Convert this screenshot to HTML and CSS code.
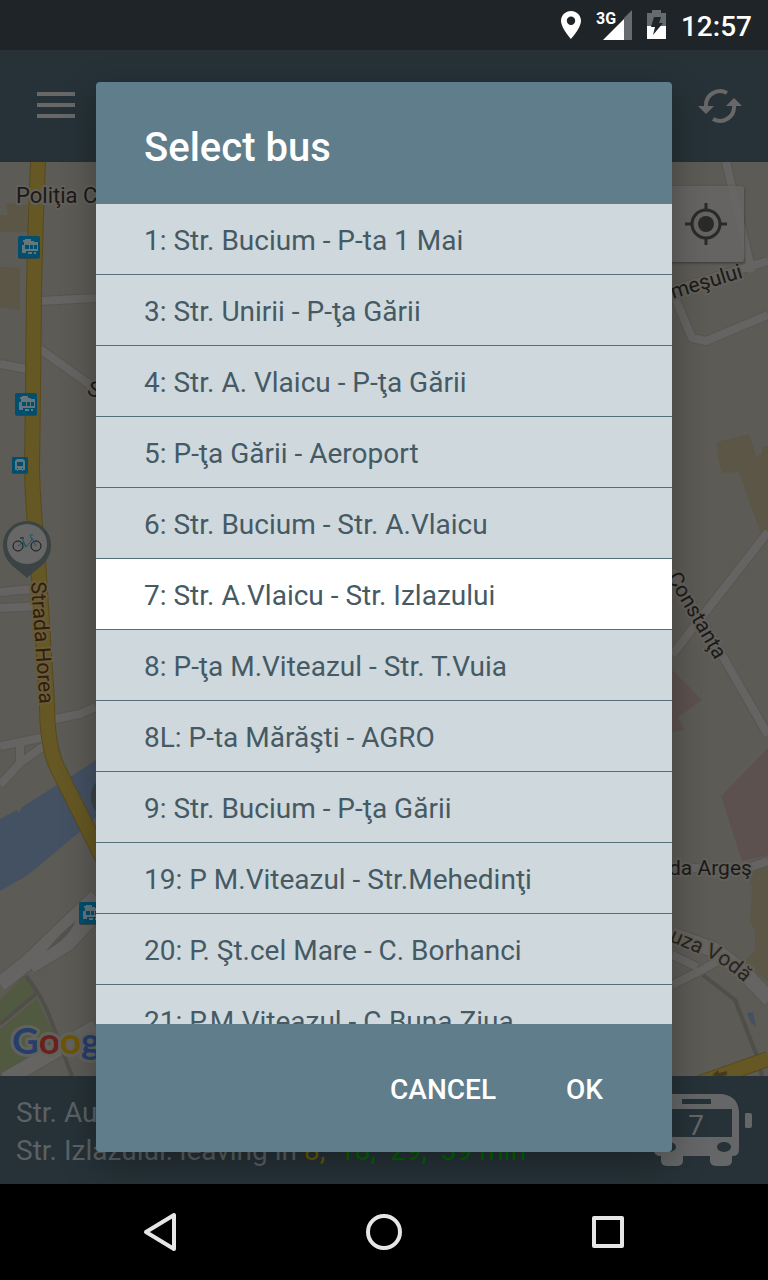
FILE: index.html
```html
<!DOCTYPE html>
<html lang="en">
<head>
<meta charset="utf-8">
<meta name="viewport" content="width=device-width, initial-scale=1">
<title>Select bus</title>
<link rel="stylesheet" href="styles.css">
</head>
<body>
<div class="app">
  <div class="status-bar">
    <svg class="status-pin" width="20" height="28" viewBox="0 0 20 28"><path fill-rule="evenodd" d="M10 0C4.500 0 0 4.300 0 9.800 0 17 10 28 10 28s10-11 10-18.200C20 4.300 15.500 0 10 0zm0 5.600a4.200 4.200 0 1 1 0 8.400 4.200 4.200 0 0 1 0-8.400z"/></svg>
    <svg class="status-signal" width="36" height="30" viewBox="0 0 36 30"><path class="faded" d="M28 8l8-8v30h-8z"/><path d="M7 30L28 9v21z"/><text x="0" y="14">3G</text></svg>
    <svg width="19" height="30" viewBox="0 0 19 30"><path class="faded" d="M0 3h5V0h9v3h5v13H0z"/><path d="M0 16h19v13H0z"/><path class="bolt" d="M7 7h7l-2 6h4L6 25l2-8H4z"/></svg>
    <span class="clock">12:57</span>
  </div>

  <header class="app-bar">
    <button class="icon-button" aria-label="Menu"><svg width="38" height="28" viewBox="0 0 38 28"><path d="M0 2h38M0 13h38M0 24h38" stroke-width="4"/></svg></button>
    <button class="icon-button" aria-label="Refresh"><svg width="44" height="36" viewBox="0 0 44 36"><path d="M8 18A14 14 0 0 1 29 5M36 18A14 14 0 0 1 15 31" stroke-width="4"/><path class="heads" d="M0 18h16l-8 8zM28 18h16l-8-8z"/></svg></button>
  </header>

  <main class="map">
    <svg class="map-canvas" viewBox="0 162 768 914" preserveAspectRatio="xMidYMid slice">
      <defs>
        <path id="cuza-voda" d="M669 941L712 959Q737 972 764 1004"/>
        <g id="tram">
          <rect class="stop-shadow" y="1" width="22" height="22" rx="2"/>
          <rect class="stop" width="22" height="22" rx="2"/>
          <path class="glyph" d="M7 3h6v2h3v1h4v9H8v2H4V9h2V6H5V4h2z"/>
          <path class="stop" d="M7 9h4v4H7zM12 9h3v4h-3zM16 9h3v4h-3z"/>
          <path class="glyph" d="M10 16h4v2h-4zM16 16h2v2h-2z"/>
        </g>
      </defs>

      <g class="building">
        <path d="M6 203l24 2v27H0v-17h8zM0 267l20 1v42l-20-3z"/>
        <path d="M717 442l32-8 7 22 6-2v-7l6-1v86l-7 2-22-62-17 1-4-15z"/>
        <path d="M748 872l20-10v120l-24-20 11-12v-20l-5-8 2-34z"/>
      </g>
      <path class="campus" d="M672 670l30 30-24 17 6 13-12 2zM768 748l-47 48 21 65 26-6z"/>
      <path class="park" d="M0 1000l25-26 11 19-36 28zM0 1029l37-31 15 32 6 14-58 32z"/>
      <path class="water" d="M0 819l17-9 2 3 3-6 56-35 18-12v58l-62 52-11 8-23 13zM747 1013l6-1 3 15-5-4z"/>

      <g class="road-edge">
        <path d="M40 301l56-3M40 349l56 40M0 364l27 5M0 592l32-3M0 608l40-2M55 719l25-5 16-7M0 746l45-9M0 785l20-22 28-20M20 745v18"/>
        <path d="M726 162l26 110M672 290l96-29M676 300l16 38 14 3 62-26M768 532l-96 123M672 570l50 85 46 80M672 867l70 3 26-9M672 955l25 12M672 985l28-14 18-10"/>
        <path class="wide" d="M672 935l40 14Q740 966 770 1000M0 984l28-22 68-65M30 966l38-23 28-30M5 1080l91-53"/>
      </g>
      <g class="road">
        <path d="M40 301l56-3M40 349l56 40M0 364l27 5M0 592l32-3M0 608l40-2M55 719l25-5 16-7M0 746l45-9M0 785l20-22 28-20M20 745v18"/>
        <path d="M726 162l26 110M672 290l96-29M676 300l16 38 14 3 62-26M768 532l-96 123M672 570l50 85 46 80M672 867l70 3 26-9M672 955l25 12M672 985l28-14 18-10"/>
        <path class="wide" d="M672 935l40 14Q740 966 770 1000M0 984l28-22 68-65M30 966l38-23 28-30M5 1080l91-53"/>
      </g>
      <path class="rail" d="M26 976q16 20 24 42l22 58M703 975l32 25 22 56 6 24M0 1024l36-30"/>
      <path class="median" d="M46 951q14-18 30-30-8 18-30 30z"/>

      <path class="avenue-edge" d="M38 162Q35 240 34 290L33 390 32 470Q33 510 38 560L47 703Q47 745 57 767L106 865M700 1083l68-24"/>
      <path class="avenue" d="M38 162Q35 240 34 290L33 390 32 470Q33 510 38 560L47 703Q47 745 57 767L106 865M700 1083l68-24"/>
      <path class="arrow" d="M712 1075l6-5 1 3 8-2v4l-8 2z"/>

      <use href="#tram" x="18" y="236"/>
      <use href="#tram" x="15" y="393"/>
      <use href="#tram" x="79" y="902"/>
      <rect class="stop-shadow" x="12" y="458" width="16" height="16" rx="1"/>
      <rect class="stop" x="12" y="457" width="16" height="16" rx="1"/>
      <path class="glyph" d="M17 459h6l2 2v9h-2v1h-1v-1h-4v1h-1v-1h-2v-9z"/>
      <path class="stop" d="M17 462h6v4h-6zM17 468h1v1h-1zM22 468h1v1h-1z"/>

      <g class="labels">
        <text class="place" x="16" y="203">Poliţia C</text>
        <text transform="translate(86 394) rotate(20)">S</text>
        <text class="major" transform="translate(31 582) rotate(86)">Strada Horea</text>
        <text transform="translate(673 299) rotate(-17)">meşului</text>
        <text transform="translate(667 577) rotate(60)">Constanţa</text>
        <text x="669" y="875">da Argeş</text>
        <text class="route"><textPath href="#cuza-voda">uza Vodă</textPath></text>
      </g>

      <circle class="pin" cx="115" cy="797" r="24"/>
      <path class="pin" d="M27 521a24 24 0 0 0-24 24c0 18 15 24 24 33 9-9 24-15 24-33a24 24 0 0 0-24-24z"/>
      <circle class="pin-face" cx="27" cy="544" r="20"/>
      <g class="bike"><circle cx="18" cy="546" r="5"/><circle cx="36" cy="546" r="5"/><path d="M20 538h4"/><path class="frame" d="M18 546l5-4 3 5 6-7-2-5h3M32 538l4 8M22 538l4 9"/></g>

      <text class="google" x="12" y="1054"><tspan class="g-blue">G</tspan><tspan class="g-red">o</tspan><tspan class="g-yellow">o</tspan><tspan class="g-blue">g</tspan></text>
    </svg>
    <button class="locate" aria-label="My location"><svg width="42" height="42" viewBox="0 0 42 42"><circle cx="21" cy="21" r="14" class="ring"/><circle cx="21" cy="21" r="8"/><path class="ring" d="M21 0v6M21 36v6M0 21h6M36 21h6"/></svg></button>
  </main>

  <section class="departures">
    <div class="departure-text">
      <p>Str. Au</p>
      <p>Str. Izlazului: leaving in <span class="soon">8,</span>&nbsp; <span class="later">18,&nbsp; 29,&nbsp; 39 min</span></p>
    </div>
    <svg class="bus" width="112" height="76" viewBox="640 1092 112 76">
      <path d="M670 1094h52q16 2 17 18v38q0 6-7 6v5q0 5-7 5h-8q-7 0-7-5v-5h-27v5q0 5-7 5h-8q-7 0-7-5v-5q-7 0-7-6v-38q1-16 14-18zM746 1113h4q2 0 2 2v11q0 2-2 2h-4q-1 0-1-2v-11q0-2 1-2zM642 1113h4q1 0 1 2v11q0 2-1 2h-4q-2 0-2-2v-11q0-2 2-2z"/>
      <path class="hole" d="M682 1099h29v5h-29zM662 1109h70v28h-70z"/>
      <ellipse class="hole" cx="724" cy="1147" rx="7" ry="5"/><ellipse class="hole" cx="669" cy="1147" rx="7" ry="5"/>
      <text x="696" y="1135">7</text>
    </svg>
  </section>

  <div class="overlay">
    <div class="dialog" role="dialog" aria-labelledby="dialog-title">
      <h1 class="dialog-title" id="dialog-title">Select bus</h1>
      <ul class="bus-list">
        <li><button class="bus-row">1: Str. Bucium - P-ta 1 Mai</button></li>
        <li><button class="bus-row">3: Str. Unirii - P-ţa Gării</button></li>
        <li><button class="bus-row">4: Str. A. Vlaicu - P-ţa Gării</button></li>
        <li><button class="bus-row">5: P-ţa Gării - Aeroport</button></li>
        <li><button class="bus-row">6: Str. Bucium - Str. A.Vlaicu</button></li>
        <li><button class="bus-row selected">7: Str. A.Vlaicu - Str. Izlazului</button></li>
        <li><button class="bus-row">8: P-ţa M.Viteazul - Str. T.Vuia</button></li>
        <li><button class="bus-row">8L: P-ta Mărăşti - AGRO</button></li>
        <li><button class="bus-row">9: Str. Bucium - P-ţa Gării</button></li>
        <li><button class="bus-row">19: P M.Viteazul - Str.Mehedinţi</button></li>
        <li><button class="bus-row">20: P. Şt.cel Mare - C. Borhanci</button></li>
        <li><button class="bus-row">21: P.M.Viteazul - C.Buna Ziua</button></li>
      </ul>
      <div class="dialog-actions">
        <button class="action">CANCEL</button>
        <button class="action">OK</button>
      </div>
    </div>
  </div>

  <nav class="nav-bar">
    <button aria-label="Back"><svg width="40" height="40" viewBox="0 0 40 40"><path d="M6 20l28-17v34z"/></svg></button>
    <button aria-label="Home"><svg width="40" height="40" viewBox="0 0 40 40"><circle cx="20" cy="20" r="16"/></svg></button>
    <button aria-label="Recent apps"><svg width="40" height="40" viewBox="0 0 40 40"><path d="M6 6h28v28H6z"/></svg></button>
  </nav>
</div>
</body>
</html>
```
FILE: styles.css
```css
* { box-sizing: border-box; }

body {
  margin: 0;
  font-family: Roboto, "Noto Sans", sans-serif;
  font-size: 28px;
  background: #000;
}

button {
  padding: 0;
  border: 0;
  background: none;
  font: inherit;
  color: inherit;
  cursor: pointer;
}

svg { display: block; }

.app {
  position: relative;
  display: flex;
  flex-direction: column;
  height: 100vh;
  overflow: hidden;
}

.status-bar {
  display: flex;
  align-items: center;
  justify-content: flex-end;
  gap: 15px;
  height: 50px;
  padding: 0 16px;
  background: #1e2427;
  color: #fff;
  fill: #fff;
}
.status-bar .faded { fill: #666b6d; }
.status-bar .bolt { fill: #1e2427; }
.status-signal text { font-size: 16px; font-weight: 700; }
.clock { padding-top: 4px; font-weight: 500; line-height: 46px; }

.app-bar {
  display: flex;
  align-items: center;
  justify-content: space-between;
  height: 112px;
  padding: 0 26px 0 37px;
  background: #263238;
}
.icon-button svg { fill: none; stroke: #686868; }
.icon-button .heads { fill: #686868; stroke: none; }

.map {
  position: relative;
  flex: 1;
  min-height: 0;
  background: #5d5b56;
}
.map-canvas { width: 100%; height: 100%; }
.building { fill: #5c5646; }
.campus { fill: #5d514f; }
.park { fill: #515a41; }
.water { fill: #445163; }
.road, .road-edge, .rail, .avenue, .avenue-edge { fill: none; stroke-linejoin: round; }
.road { stroke: #656462; stroke-width: 8; }
.road-edge { stroke: #575550; stroke-width: 10; }
.road .wide { stroke-width: 15; }
.road-edge .wide { stroke-width: 17; }
.rail { stroke: #4f4e49; stroke-width: 4; }
.median { fill: #54524e; }
.avenue { stroke: #665824; stroke-width: 14; }
.avenue-edge { stroke: #57491f; stroke-width: 16; }
.arrow { fill: #443b1c; }
.stop { fill: #004f6e; }
.stop-shadow { fill: #3b4548; }
.glyph { fill: #66767b; }

.labels text {
  font-size: 21px;
  fill: #1c1a17;
  stroke: #62605c;
  stroke-width: 4;
  stroke-linejoin: round;
  paint-order: stroke;
}
.labels .place { font-size: 22px; }
.labels .major { fill: #351c08; stroke: #665d3e; }
.labels .route { fill: #29251a; }

.pin { fill: #3c4344; }
.pin-face { fill: #676767; }
.bike { fill: none; stroke: #161616; stroke-width: 1; }
.bike .frame { stroke: #1d4f63; }

.google {
  font-family: Lato, sans-serif;
  font-size: 37px;
  font-weight: 700;
  stroke: #62625c;
  stroke-width: 6;
  stroke-linejoin: round;
  paint-order: stroke;
}
.g-blue { fill: #263e6c; }
.g-red { fill: #6a211d; }
.g-yellow { fill: #6c5507; }

.locate {
  position: absolute;
  top: 24px;
  right: 24px;
  display: grid;
  place-items: center;
  width: 76px;
  height: 76px;
  border-radius: 3px;
  background: rgba(102, 102, 101, 0.85);
  box-shadow: 0 1px 3px rgba(0, 0, 0, 0.4);
  fill: #2a2a2a;
}
.locate .ring { fill: none; stroke: #2a2a2a; stroke-width: 3; }

.departures {
  display: flex;
  align-items: center;
  justify-content: space-between;
  height: 108px;
  padding: 0 16px;
  background: #263238;
  color: #5b6164;
}
.departure-text { flex: 1; min-width: 0; padding-top: 4px; white-space: nowrap; }
.departures p { margin: 0; line-height: 38px; }
.soon { color: #665c00; }
.later { color: #006400; }
.bus { flex: none; fill: #656667; }
.bus .hole { fill: #263238; }
.bus text { text-anchor: middle; }

.overlay {
  position: absolute;
  inset: 0;
  display: flex;
  padding: 82px 12.5% 128px;
}
.dialog {
  display: flex;
  flex: 1;
  flex-direction: column;
  min-width: 0;
  overflow: hidden;
  border-radius: 4px;
  background: #607d8b;
  box-shadow: 0 12px 36px rgba(0, 0, 0, 0.3);
  color: #fff;
}
.dialog-title {
  margin: 0;
  padding: 42px 48px 32px;
  font-size: 40px;
  font-weight: 500;
  line-height: 48px;
}
.bus-list {
  flex: 1;
  min-height: 0;
  margin: 0;
  padding: 0;
  overflow: hidden;
  list-style: none;
  background: #cfd8dd;
  color: #455a64;
}
.bus-list li { border-bottom: 1px solid #546e7a; }
.bus-row {
  display: block;
  width: 100%;
  height: 70px;
  padding: 2px 48px 0;
  text-align: left;
  white-space: nowrap;
}
.selected { background: #fff; }

.dialog-actions {
  display: flex;
  align-items: center;
  justify-content: flex-end;
  gap: 22px;
  height: 128px;
  padding: 4px 45px 0;
}
.action { padding: 0 24px; font-weight: 500; line-height: 72px; }

.nav-bar {
  position: relative;
  display: flex;
  height: 96px;
  padding: 0 48px;
  background: #000;
}
.nav-bar button { display: grid; flex: 1; place-items: center; }
.nav-bar svg { fill: none; stroke: #e6e6e6; stroke-width: 4; stroke-linejoin: round; }
```
